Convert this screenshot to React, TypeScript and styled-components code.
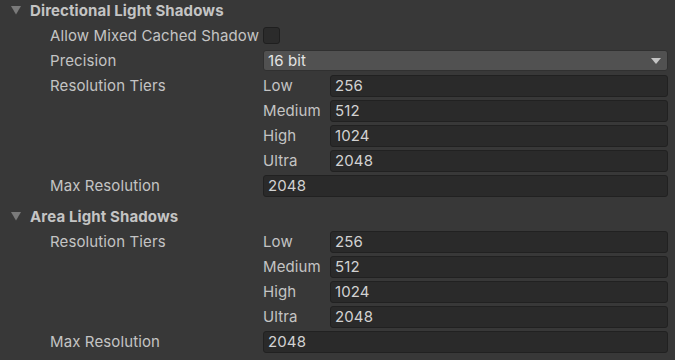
import React from "react";
import styled, { createGlobalStyle } from "styled-components";

const Global = createGlobalStyle`
  html, body { margin: 0; padding: 0; background: #383838; }
  body { font-family: Inter, "Noto Sans", "Liberation Sans", sans-serif; }
`;

const Page = styled.div`
  width: 675px;
  height: 360px;
  overflow: hidden;
  background: #383838;
  color: #c4c4c4;
  font-size: 15px;
  letter-spacing: 0.12px;
`;

const Section = styled.section<{ $gap?: number }>`
  display: flex;
  flex-direction: column;
  margin-bottom: ${(p) => p.$gap ?? 0}px;
`;

const Header = styled.div`
  height: 20px;
  margin-bottom: 3px;
  display: flex;
  align-items: center;
  padding-left: 11px;
  gap: 9px;
  font-weight: 700;
  color: #c4c4c4;
`;

const Row = styled.div`
  display: grid;
  grid-template-columns: 213px 1fr;
  padding-left: 50px;
  padding-right: 7px;
  align-items: start;
`;

const Label = styled.div`
  height: 25px;
  line-height: 25px;
  white-space: nowrap;
`;

const Cell = styled.div`
  height: 25px;
  display: flex;
  align-items: center;
`;

const SubGrid = styled.div`
  display: grid;
  grid-template-columns: 67px 1fr;
`;

const Field = styled.div`
  height: 22px;
  box-sizing: border-box;
  width: 100%;
  background: #2a2a2a;
  border: 1px solid #212121;
  border-radius: 3px;
  padding-left: 4px;
  display: flex;
  align-items: center;
  color: #d2d2d2;
`;

const Dropdown = styled(Field)`
  height: 21px;
  background: #515151;
  border-color: #303030;
  justify-content: space-between;
  padding-right: 6px;
  color: #e4e4e4;
`;

const Checkbox = styled.div`
  width: 17px;
  height: 17px;
  box-sizing: border-box;
  background: #2b2b2b;
  border: 1px solid #1f1f1f;
  border-radius: 3px;
`;

const Fold = () => (
  <svg width="10" height="9" viewBox="0 0 10 9">
    <path d="M0 0 L10 0 L5 8.5 Z" fill="#7a7a7a" />
  </svg>
);

const Arrow = () => (
  <svg width="10" height="6" viewBox="0 0 10 6">
    <path d="M0 0 L10 0 L5 6 Z" fill="#c4c4c4" />
  </svg>
);

const tiers: [string, string][] = [
  ["Low", "256"],
  ["Medium", "512"],
  ["High", "1024"],
  ["Ultra", "2048"],
];

const Tiers = () => (
  <Row>
    <Label>Resolution Tiers</Label>
    <SubGrid>
      {tiers.map(([k, v]) => (
        <React.Fragment key={k}>
          <Label>{k}</Label>
          <Cell>
            <Field>{v}</Field>
          </Cell>
        </React.Fragment>
      ))}
    </SubGrid>
  </Row>
);

const MaxRes = () => (
  <Row>
    <Label>Max Resolution</Label>
    <Cell>
      <Field>2048</Field>
    </Cell>
  </Row>
);

export default function App() {
  return (
    <Page>
      <Global />
      <Section $gap={8}>
        <Header>
          <Fold />
          Directional Light Shadows
        </Header>
        <Row>
          <Label>Allow Mixed Cached Shadow</Label>
          <Cell>
            <Checkbox />
          </Cell>
        </Row>
        <Row>
          <Label>Precision</Label>
          <Cell>
            <Dropdown>
              16 bit
              <Arrow />
            </Dropdown>
          </Cell>
        </Row>
        <Tiers />
        <MaxRes />
      </Section>
      <Section>
        <Header>
          <Fold />
          Area Light Shadows
        </Header>
        <Tiers />
        <MaxRes />
      </Section>
    </Page>
  );
}
